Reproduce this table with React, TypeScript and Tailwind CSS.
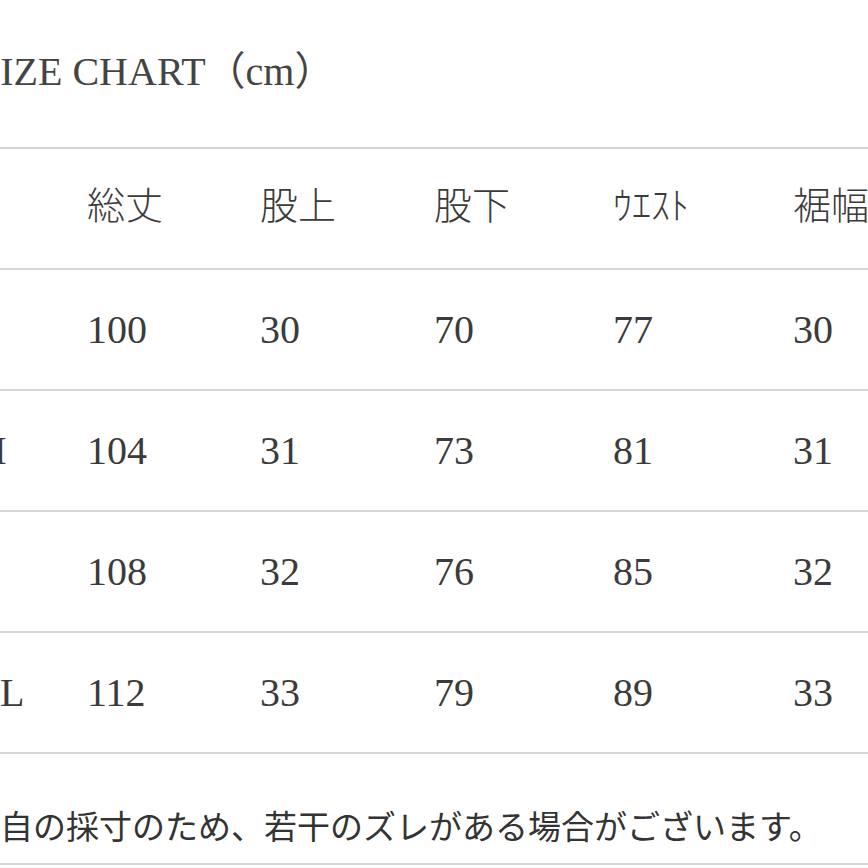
import React from "react";

const headers = ["総丈", "股上", "股下", "ｳｴｽﾄ", "裾幅"];
const rows: [string, string[]][] = [
  ["S", ["100", "30", "70", "77", "30"]],
  ["M", ["104", "31", "73", "81", "31"]],
  ["L", ["108", "32", "76", "85", "32"]],
  ["XL", ["112", "33", "79", "89", "33"]],
];

const serif = "font-['Liberation_Serif','Noto_Sans_CJK_JP',serif]";

function Row({ label, cells }: { label: string; cells: string[] }) {
  return (
    <div className="h-[121px] border-t-2 border-[#d5d5d5] flex items-center">
      <div
        className={`-ml-[29px] grid grid-cols-[116px_173px_174px_179px_180px_120px] items-center text-[40px] leading-none text-[#3b3b3b] whitespace-nowrap ${serif}`}
      >
        <div>{label}</div>
        {cells.map((c, i) => (
          <div key={i}>{c}</div>
        ))}
      </div>
    </div>
  );
}

export default function App() {
  return (
    <div className="w-[868px] h-[868px] overflow-hidden bg-white">
      <div className="h-[147px] flex items-center pb-[3px]">
        <h1
          className={`-ml-[22px] text-[40px] leading-none text-[#444] whitespace-nowrap ${serif}`}
        >
          SIZE CHART（cm）
        </h1>
      </div>
      <div className="h-[121px] border-t-2 border-[#d5d5d5] flex items-center pb-[12px]">
        <div className="-ml-[29px] grid grid-cols-[116px_173px_174px_179px_180px_120px] items-center text-[38px] leading-none text-[#3b3b3b] whitespace-nowrap font-['Noto_Sans_CJK_JP',sans-serif] font-light">
          <div></div>
          {headers.map((h, i) => (
            <div key={i}>{h}</div>
          ))}
        </div>
      </div>
      {rows.map(([l, c]) => (
        <Row key={l} label={l} cells={c} />
      ))}
      <div className="h-[113px] border-t-2 border-b-2 border-[#d5d5d5] flex items-start pt-[55px]">
        <p className="-ml-[33px] text-[33px] leading-none text-[#333] whitespace-nowrap font-['Noto_Sans_CJK_JP',sans-serif]">
          独自の採寸のため、若干のズレがある場合がございます。
        </p>
      </div>
    </div>
  );
}
